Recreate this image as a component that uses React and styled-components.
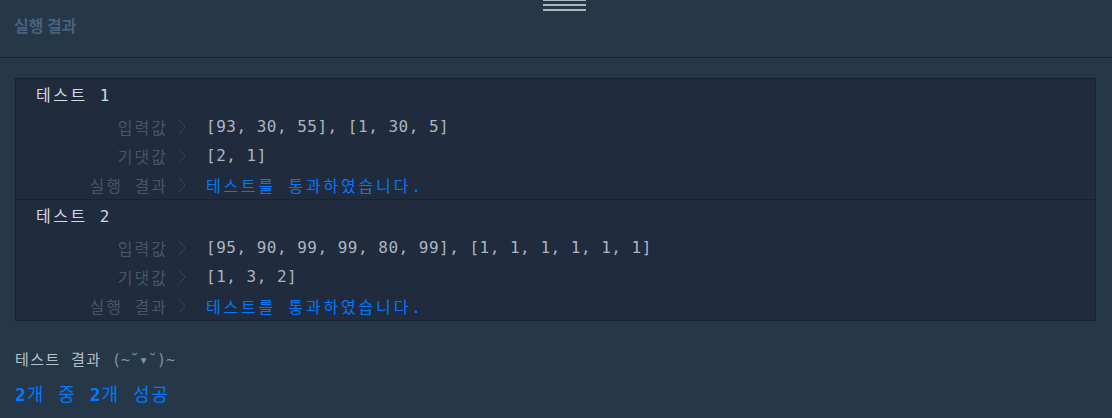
import React from 'react';
import styled, { createGlobalStyle } from 'styled-components';

const GlobalStyle = createGlobalStyle`
    html, body {
        margin: 0;
        padding: 0;
        background: #263747;
    }
    body {
        font-family: "Noto Sans", "Noto Sans CJK KR", sans-serif;
    }
`;

const Panel = styled.div`
    position: relative;
    width: 1112px;
    height: 418px;
    overflow: hidden;
    background: #263747;
    display: flex;
    flex-flow: column nowrap;
`;

const DragHandle = styled.div`
    position: absolute;
    top: -1px;
    left: 543px;
    width: 43px;
    display: flex;
    flex-flow: column nowrap;
    gap: 3px;
`;

const HandleLine = styled.div`
    height: 2px;
    background: #aab7c3;
`;

const Header = styled.div`
    height: 58px;
    border-bottom: 1px solid #172334;
    box-sizing: border-box;
    display: flex;
    align-items: flex-start;
    padding: 13px 15px 0 14px;
`;

const HeaderTitle = styled.h2`
    margin: 0;
    font-family: "Noto Sans CJK KR", sans-serif;
    font-size: 16px;
    line-height: 24px;
    font-weight: 700;
    color: #46627f;
`;

const Body = styled.div`
    padding: 20px 16px 0 15px;
    font-family: "DejaVu Sans Mono", "Noto Sans CJK KR", monospace;
`;

const ResultBox = styled.div`
    background: #202b3d;
    border: 1px solid #172334;
`;

const TestBlock = styled.div`
    padding: 5px 0 0 20px;
    border-top: ${p => (p.first ? 'none' : '1px solid #172334')};
`;

const TestTitle = styled.div`
    font-size: 16px;
    line-height: 24px;
    letter-spacing: 2.5px;
    color: #d2d9e1;
    margin-bottom: 4px;
`;

const Row = styled.div`
    display: flex;
    align-items: center;
    height: 29px;
`;

const Label = styled.div`
    width: 132px;
    text-align: right;
    font-size: 16px;
    letter-spacing: 2px;
    color: #46576a;
    white-space: pre;
`;

const Chevron = styled.svg`
    margin-left: 10px;
    width: 8px;
    height: 16px;
    flex: none;
`;

const Value = styled.div`
    margin-left: 20px;
    font-size: 16px;
    letter-spacing: ${p => (p.pass ? '2.8px' : '0.5px')};
    color: ${p => (p.pass ? '#0078ff' : '#a9b5c1')};
    white-space: pre;
`;

const Summary = styled.div`
    margin-top: 27px;
    font-size: 15px;
    line-height: 24px;
    letter-spacing: 1.4px;
    color: #b2c0cc;
`;

const Face = styled.span`
    color: #7d93a3;
    letter-spacing: 0;
`;

const Score = styled.div`
    margin-top: 9px;
    font-size: 18px;
    line-height: 28px;
    letter-spacing: 2px;
    color: #0078ff;

    strong {
        font-weight: 700;
        letter-spacing: 1px;
    }
`;

const tests = [
    { id: 1, input: '[93, 30, 55], [1, 30, 5]', expected: '[2, 1]' },
    { id: 2, input: '[95, 90, 99, 99, 80, 99], [1, 1, 1, 1, 1, 1]', expected: '[1, 3, 2]' },
];

function ResultRow({ label, children, pass }) {
    return (
        <Row>
            <Label>{label}</Label>
            <Chevron viewBox="0 0 8 16">
                <polyline points="1,1 7,8 1,15" fill="none" stroke="#35465a" strokeWidth="1" />
            </Chevron>
            <Value pass={pass}>{children}</Value>
        </Row>
    );
}

export default function App() {
    return (
        <Panel>
            <GlobalStyle />
            <DragHandle>
                <HandleLine />
                <HandleLine />
                <HandleLine />
            </DragHandle>
            <Header>
                <HeaderTitle>실행 결과</HeaderTitle>
            </Header>
            <Body>
                <ResultBox>
                    {tests.map((t, i) => (
                        <TestBlock key={t.id} first={i === 0}>
                            <TestTitle>테스트 {t.id}</TestTitle>
                            <ResultRow label="입력값">{t.input}</ResultRow>
                            <ResultRow label="기댓값">{t.expected}</ResultRow>
                            <ResultRow label="실행 결과" pass>테스트를 통과하였습니다.</ResultRow>
                        </TestBlock>
                    ))}
                </ResultBox>
                <Summary>
                    테스트 결과 <Face>(~˘▾˘)~</Face>
                </Summary>
                <Score>
                    <strong>2</strong>개 중 <strong>2</strong>개 성공
                </Score>
            </Body>
        </Panel>
    );
}
